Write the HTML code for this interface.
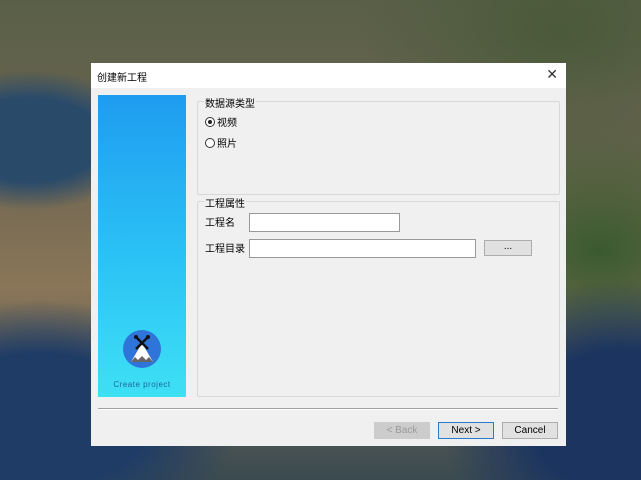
<!DOCTYPE html>
<html><head><meta charset="utf-8"><style>
body{margin:0;width:641px;height:480px;overflow:hidden;position:relative;font-family:"Liberation Sans","Noto Sans CJK SC",sans-serif;font-size:10px;color:#000;
background:
radial-gradient(ellipse 120px 70px at 30px 140px,#2a4a6a 0,#2a4a6a 60%,transparent 100%),
radial-gradient(ellipse 200px 120px at 40px 420px,#1e3c66 0,#1e3c66 55%,transparent 100%),
radial-gradient(ellipse 180px 140px at 620px 420px,#1c3560 0,#1c3560 50%,transparent 100%),
radial-gradient(ellipse 200px 120px at 560px 30px,#4a5a3a 0,transparent 100%),
radial-gradient(ellipse 200px 150px at 600px 250px,#3a5a30 0,transparent 100%),
linear-gradient(180deg,#5a6048 0,#6a6450 30%,#8a7658 60%,#3a4a50 100%);}
.dlg{position:absolute;left:91px;top:63px;width:475px;height:383px;background:#f0f0f0;}
.tb{height:25px;background:#fff;position:relative}
.tb span{position:absolute;left:6px;top:6px;font-size:10px}
.x{position:absolute;right:8px;top:3px;font-size:14px;color:#333}
.lp{position:absolute;left:7px;top:32px;width:88px;height:302px;background:linear-gradient(180deg,#1f9cf0 0,#2bc3f5 55%,#3ee0f5 100%)}
.ic{position:absolute;left:25px;top:235px;width:38px;height:38px;border-radius:50%;background:#2f74d8;overflow:hidden}
.cp{position:absolute;left:0;width:88px;top:285px;text-align:center;font-size:8px;color:#1a6a9a;letter-spacing:.5px}
.g{position:absolute;border:1px solid #d8d8d8;border-radius:2px}
.lg{position:absolute;top:-7px;left:6px;background:#f0f0f0;padding:0 1px;font-size:10px}
.r{position:absolute;left:7px;font-size:10px}
.r i{display:inline-block;width:8px;height:8px;border:1px solid #333;border-radius:50%;vertical-align:-1px;margin-right:2px;position:relative;background:#fff}
.r i.on:after{content:"";position:absolute;left:2px;top:2px;width:4px;height:4px;border-radius:50%;background:#222}
.in{position:absolute;background:#fff;border:1px solid #999;height:17px}
.b{position:absolute;top:359px;height:15px;width:54px;border:1px solid #adadad;background:#e1e1e1;text-align:center;line-height:15px;font-size:10px}
</style></head><body>
<div class="dlg">
<div class="tb"><span>创建新工程</span><div class="x">✕</div></div>
<div class="lp">
<div class="ic"><svg width="38" height="38" viewBox="0 0 38 38"><path d="M8 32 L19 13 L30 32 Z" fill="#fff"/><path d="M8 32 L12 27 L15 30 L19 26 L23 30 L26 27 L30 32 Z" fill="#666"/><path d="M13 7 L25 19 M25 7 L13 19" stroke="#111" stroke-width="2.5"/><circle cx="13" cy="7" r="2" fill="#111"/><circle cx="25" cy="7" r="2" fill="#111"/></svg></div>
<div class="cp">Create project</div>
</div>
<div class="g" style="left:106px;top:38px;width:361px;height:92px"><div class="lg">数据源类型</div>
<div class="r" style="top:12px"><i class="on"></i>视频</div>
<div class="r" style="top:33px"><i></i>照片</div></div>
<div class="g" style="left:106px;top:138px;width:361px;height:194px"><div class="lg">工程属性</div>
<div class="r" style="top:12px;left:7px">工程名</div>
<div class="r" style="top:38px;left:7px">工程目录</div>
<div class="in" style="left:51px;top:11px;width:149px"></div>
<div class="in" style="left:51px;top:37px;width:225px"></div>
<div class="b" style="left:286px;top:38px;height:14px;width:46px;line-height:12px">...</div>
</div>
<div style="position:absolute;left:7px;top:345px;width:460px;height:1px;background:#a0a0a0;border-bottom:1px solid #fff"></div>
<div class="b" style="left:283px;background:#ccc;color:#999;border-color:#ccc">&lt; Back</div>
<div class="b" style="left:347px;border:1px solid #2a7ad0">Next &gt;</div>
<div class="b" style="left:411px">Cancel</div>
</div>
</body></html>
